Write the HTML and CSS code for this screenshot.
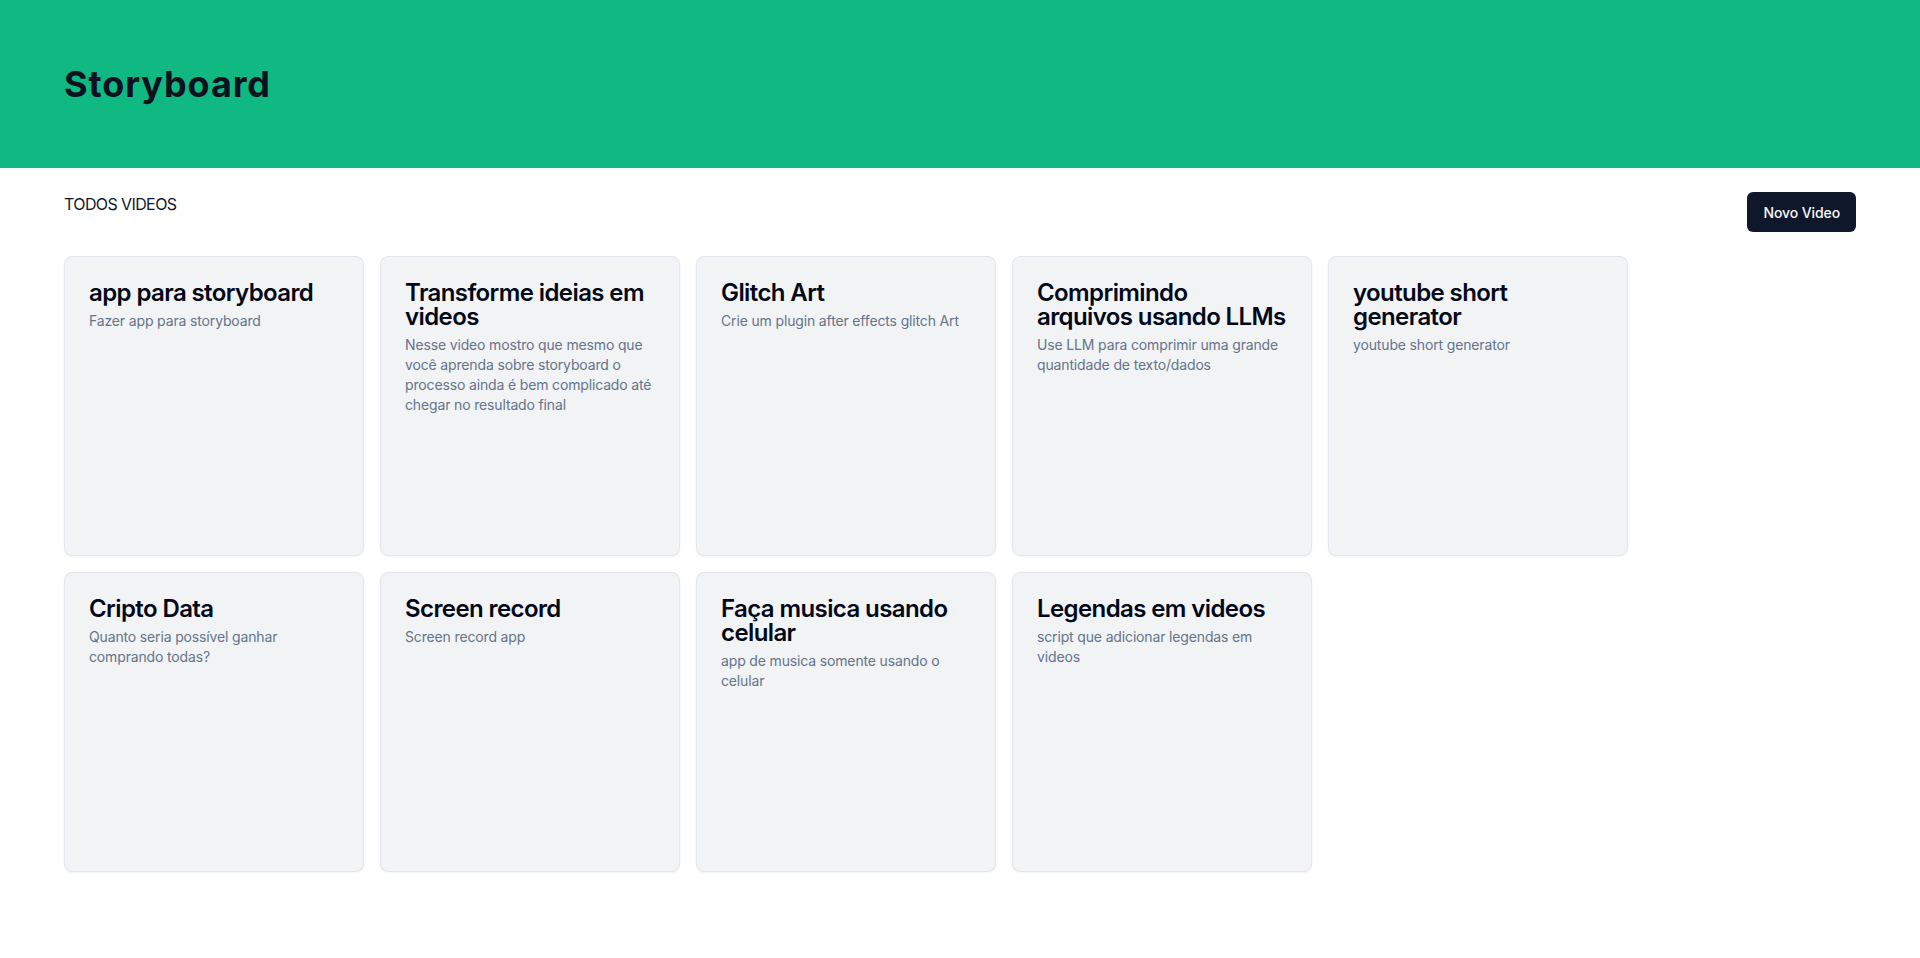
FILE: index.html
```html
<!DOCTYPE html>
<html lang="pt">
<head>
<meta charset="utf-8">
<title>Storyboard</title>
<link rel="stylesheet" href="styles.css">
</head>
<body>
<header class="hero">
  <h1 class="hero-title">Storyboard</h1>
</header>
<main class="content">
  <div class="toolbar">
    <h2 class="section-label">TODOS VIDEOS</h2>
    <button class="btn-primary">Novo Video</button>
  </div>
  <div class="cards">
    <article class="card">
      <h3 class="card-title">app para storyboard</h3>
      <p class="card-desc">Fazer app para storyboard</p>
    </article>
    <article class="card">
      <h3 class="card-title">Transforme ideias em videos</h3>
      <p class="card-desc">Nesse video mostro que mesmo que você aprenda sobre storyboard o processo ainda é bem complicado até chegar no resultado final</p>
    </article>
    <article class="card">
      <h3 class="card-title">Glitch Art</h3>
      <p class="card-desc">Crie um plugin after effects glitch Art</p>
    </article>
    <article class="card">
      <h3 class="card-title">Comprimindo arquivos usando LLMs</h3>
      <p class="card-desc">Use LLM para comprimir uma grande quantidade de texto/dados</p>
    </article>
    <article class="card">
      <h3 class="card-title">youtube short generator</h3>
      <p class="card-desc">youtube short generator</p>
    </article>
    <article class="card">
      <h3 class="card-title">Cripto Data</h3>
      <p class="card-desc">Quanto seria possível ganhar comprando todas?</p>
    </article>
    <article class="card">
      <h3 class="card-title">Screen record</h3>
      <p class="card-desc">Screen record app</p>
    </article>
    <article class="card">
      <h3 class="card-title">Faça musica usando celular</h3>
      <p class="card-desc">app de musica somente usando o celular</p>
    </article>
    <article class="card">
      <h3 class="card-title">Legendas em videos</h3>
      <p class="card-desc">script que adicionar legendas em videos</p>
    </article>
  </div>
</main>
</body>
</html>
```
FILE: styles.css
```css
* { box-sizing: border-box; }
html, body { margin: 0; padding: 0; background: #ffffff; }
body {
  font-family: Inter, "Noto Sans", sans-serif;
  color: #020817;
}
.hero {
  background: #10b981;
  padding: 64px 64px;
}
.hero-title {
  margin: 0;
  font-size: 36px;
  line-height: 40px;
  font-weight: 700;
  letter-spacing: 0.025em;
  color: #0b1120;
}
.content {
  padding: 24px 64px;
}
.toolbar {
  display: flex;
  justify-content: space-between;
  align-items: flex-start;
  height: 40px;
}
.section-label {
  margin: 0;
  font-size: 16px;
  line-height: 24px;
  font-weight: 400;
  letter-spacing: -0.6px;
  color: #0f172a;
}
.btn-primary {
  font-family: Inter, "Noto Sans", sans-serif;
  height: 40px;
  padding: 0 16px;
  border: 0;
  border-radius: 6px;
  background: #0f172a;
  color: #f8fafc;
  font-size: 14px;
  font-weight: 500;
  letter-spacing: -0.1px;
  cursor: pointer;
}
.cards {
  margin-top: 24px;
  display: flex;
  flex-wrap: wrap;
  gap: 16px;
}
.card {
  width: 300px;
  height: 300px;
  padding: 24px;
  background: #f2f3f5;
  border: 1px solid #e3e6ec;
  border-radius: 8px;
  box-shadow: 0 1px 2px rgba(0, 0, 0, 0.05);
}
.card-title {
  margin: 0;
  font-size: 24px;
  line-height: 24px;
  font-weight: 600;
  letter-spacing: -0.6px;
  color: #020817;
}
.card-desc {
  margin: 6px 0 0;
  font-size: 14px;
  line-height: 20px;
  letter-spacing: -0.15px;
  color: #64748b;
}
```
